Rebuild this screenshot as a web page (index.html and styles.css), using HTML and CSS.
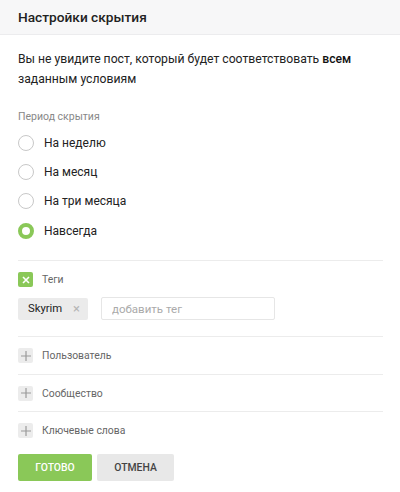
FILE: index.html
```html
<!DOCTYPE html>
<html lang="ru">

<head>
    <meta charset="UTF-8">
    <meta name="viewport" content="width=device-width, initial-scale=1.0">
    <title>Настройки скрытия</title>
    <link rel="stylesheet" href="styles.css">
</head>

<body>
    <div class="hide-settings">
        <div class="hs-header">Настройки скрытия</div>
        <div class="hs-body">
            <p class="hs-intro">Вы не увидите пост, который будет соответствовать <b>всем</b> заданным условиям</p>

            <div class="hs-label">Период скрытия</div>
            <div class="radio-list">
                <label class="radio"><span class="radio-dot"></span>На неделю</label>
                <label class="radio"><span class="radio-dot"></span>На месяц</label>
                <label class="radio"><span class="radio-dot"></span>На три месяца</label>
                <label class="radio checked"><span class="radio-dot"></span>Навсегда</label>
            </div>

            <div class="section open">
                <div class="section-title">
                    <span class="toggle on">
                        <svg width="8" height="8" viewBox="0 0 8 8"><path d="M1 1L7 7M7 1L1 7" stroke="#fff" stroke-width="1.6"/></svg>
                    </span>
                    Теги
                </div>
                <div class="tags">
                    <span class="tag">Skyrim <span class="tag-x">&times;</span></span>
                    <input class="tag-input" type="text" placeholder="добавить тег">
                </div>
            </div>

            <div class="section">
                <div class="section-title">
                    <span class="toggle">
                        <svg width="10" height="10" viewBox="0 0 10 10"><path d="M5 0V10M0 5H10" stroke="#9a9a9a" stroke-width="1.2"/></svg>
                    </span>
                    Пользователь
                </div>
            </div>

            <div class="section">
                <div class="section-title">
                    <span class="toggle">
                        <svg width="10" height="10" viewBox="0 0 10 10"><path d="M5 0V10M0 5H10" stroke="#9a9a9a" stroke-width="1.2"/></svg>
                    </span>
                    Сообщество
                </div>
            </div>

            <div class="section">
                <div class="section-title">
                    <span class="toggle">
                        <svg width="10" height="10" viewBox="0 0 10 10"><path d="M5 0V10M0 5H10" stroke="#9a9a9a" stroke-width="1.2"/></svg>
                    </span>
                    Ключевые слова
                </div>
            </div>

            <div class="actions">
                <button class="btn btn-ok">Готово</button>
                <button class="btn btn-cancel">Отмена</button>
            </div>
        </div>
    </div>
</body>

</html>
```

FILE: styles.css
```css
body {
    margin: 0;
    background-color: #fff;
    font-family: Roboto, 'Noto Sans', sans-serif;
    color: #222;
}

.hs-header {
    height: 35px;
    line-height: 34px;
    padding: 0 18px;
    background-color: #f7f7f8;
    border-bottom: 1px solid #ececee;
    box-sizing: border-box;
    font-size: 13.7px;
    font-weight: 500;
    color: #222;
}

.hs-body {
    padding: 0 17px 0 18px;
}

.hs-intro {
    margin: 14px 0 0;
    font-size: 12.2px;
    line-height: 20px;
    color: #222;
}

.hs-intro b {
    font-weight: 500;
    color: #111;
}

.hs-label {
    margin-top: 20px;
    font-size: 10.5px;
    line-height: 16px;
    color: #888;
}

.radio-list {
    display: flex;
    flex-direction: column;
    padding: 3px 0 14px;
}

.radio {
    display: flex;
    align-items: center;
    gap: 10px;
    height: 29.4px;
    font-size: 12px;
    color: #222;
}

.radio-dot {
    width: 16px;
    height: 16px;
    border: 1px solid #c8c8c8;
    border-radius: 50%;
    box-sizing: border-box;
}

.radio.checked .radio-dot {
    border: 4px solid #8ac858;
}

.section {
    border-top: 1px solid #ececec;
    padding: 11px 0 10.5px;
}

.section-title {
    display: flex;
    align-items: center;
    gap: 9px;
    height: 15px;
    font-size: 10.4px;
    color: #666;
}

.toggle {
    display: flex;
    align-items: center;
    justify-content: center;
    width: 15px;
    height: 15px;
    border-radius: 2px;
    background-color: #ececec;
}

.toggle.on {
    background-color: #8ac858;
}

.section.open {
    padding: 11.5px 0 16px;
}

.tags {
    display: flex;
    align-items: center;
    gap: 13px;
    margin-top: 10px;
}

.tag {
    display: flex;
    align-items: center;
    justify-content: space-between;
    width: 70px;
    height: 22px;
    padding: 0 8px 0 10px;
    border-radius: 2px;
    box-sizing: border-box;
    background-color: #ebebeb;
    font-size: 11.3px;
    color: #222;
}

.tag-x {
    font-size: 13px;
    color: #b5b5b5;
}

.tag-input {
    width: 174px;
    height: 23px;
    padding: 0 10px;
    border: 1px solid #e6e6e6;
    border-radius: 2px;
    box-sizing: border-box;
    font-family: inherit;
    font-size: 11.5px;
    color: #222;
    outline: none;
}

.tag-input::placeholder {
    color: #aaa;
}

.actions {
    display: flex;
    gap: 5px;
    padding-top: 5px;
}

.btn {
    height: 27px;
    border: none;
    border-radius: 2px;
    font-family: inherit;
    font-size: 10.4px;
    font-weight: 500;
    text-transform: uppercase;
    cursor: pointer;
}

.btn-ok {
    width: 74px;
    background-color: #8ac858;
    color: #fff;
}

.btn-cancel {
    width: 77px;
    background-color: #e8e8e8;
    color: #444;
}
```
